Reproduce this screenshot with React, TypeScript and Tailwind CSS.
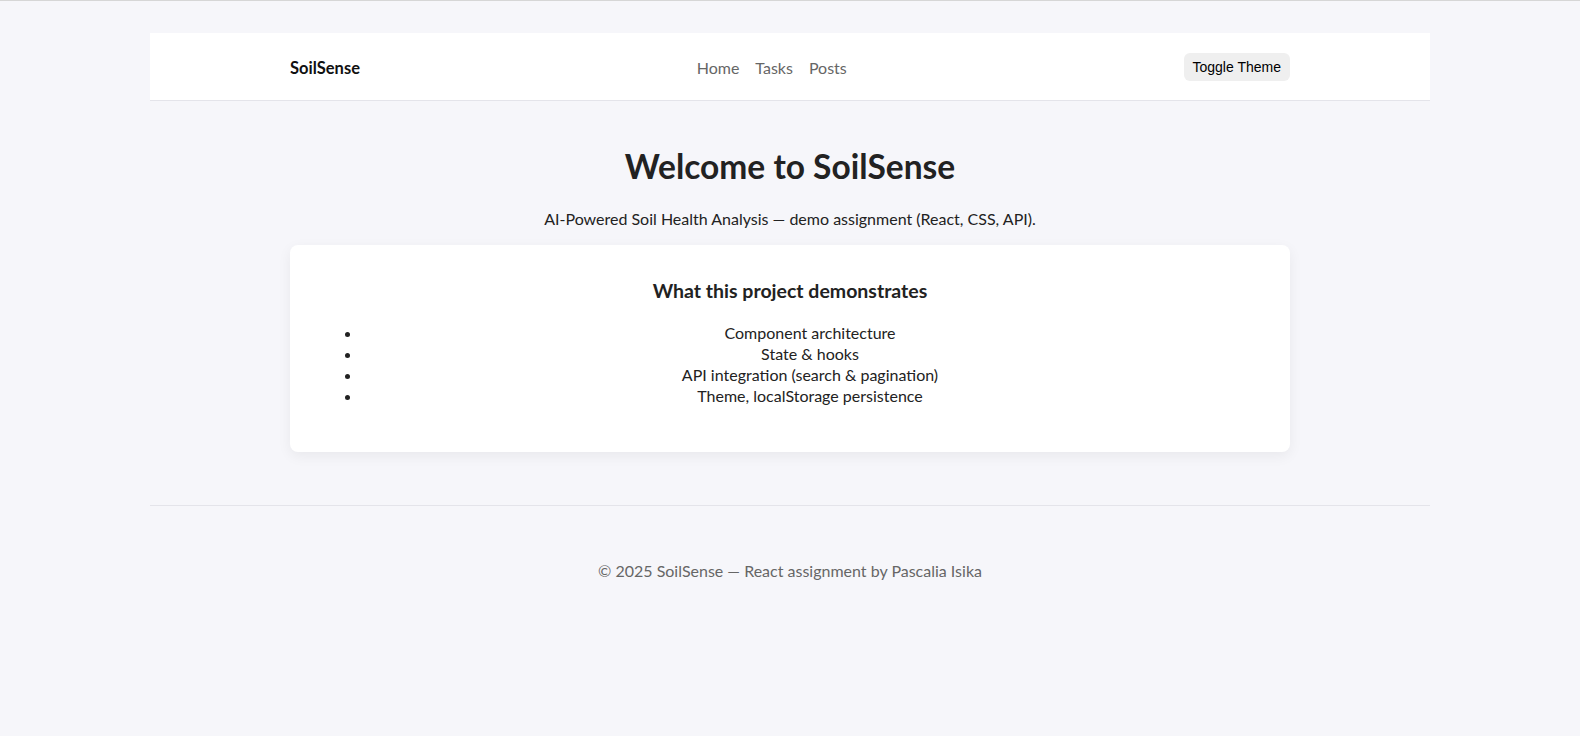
import React from 'react';

const features = [
  'Component architecture',
  'State & hooks',
  'API integration (search & pagination)',
  'Theme, localStorage persistence',
];

const App: React.FC = () => {
  return (
    <div className="min-h-screen w-[1580px] bg-[#f6f6fa] border-t border-[#d6d6d6] pt-[32px] font-['Lato','Noto_Sans',sans-serif] text-[#222]">
      <header className="mx-auto w-[1280px] h-[68px] bg-white border-b border-[#e4e4ea]">
        <nav className="mx-auto w-[1000px] h-full flex items-center justify-between">
          <span className="mt-[4px] text-[16.5px] leading-[21px] font-bold text-[#111]">SoilSense</span>
          <div className="mt-[2px] flex items-center gap-[16px] text-[16px] leading-[21px] text-[#666]">
            <a href="#">Home</a>
            <a href="#">Tasks</a>
            <a href="#">Posts</a>
          </div>
          <button className="bg-[#efefef] rounded-[6px] px-[9px] py-[6px] text-[14px] leading-[16px] text-black font-['Liberation_Sans',Arial,sans-serif]">
            Toggle Theme
          </button>
        </nav>
      </header>

      <main className="mx-auto w-[1000px] text-center">
        <h1 className="mt-[45px] text-[33.5px] leading-[40px] font-bold text-[#222]">Welcome to SoilSense</h1>
        <p className="mt-[22px] text-[16px] leading-[21px]">
          AI-Powered Soil Health Analysis — demo assignment (React, CSS, API).
        </p>
        <section className="mt-[16px] h-[207px] bg-white rounded-[8px] shadow-[0_4px_14px_rgba(0,0,0,0.06)] px-[32px] pt-[33px]">
          <h3 className="text-[19.5px] leading-[25px] font-bold text-[#222]">What this project demonstrates</h3>
          <ul className="mt-[19px] list-disc pl-[40px] text-[16px] leading-[21px]">
            {features.map((f) => (
              <li key={f}>{f}</li>
            ))}
          </ul>
        </section>
      </main>

      <footer className="mx-auto w-[1280px] mt-[53px] border-t border-[#e4e4ea] pt-[54px] text-center text-[16px] leading-[21px] text-[#666]">
        © 2025 SoilSense — React assignment by Pascalia Isika
      </footer>
    </div>
  );
};

export default App;
